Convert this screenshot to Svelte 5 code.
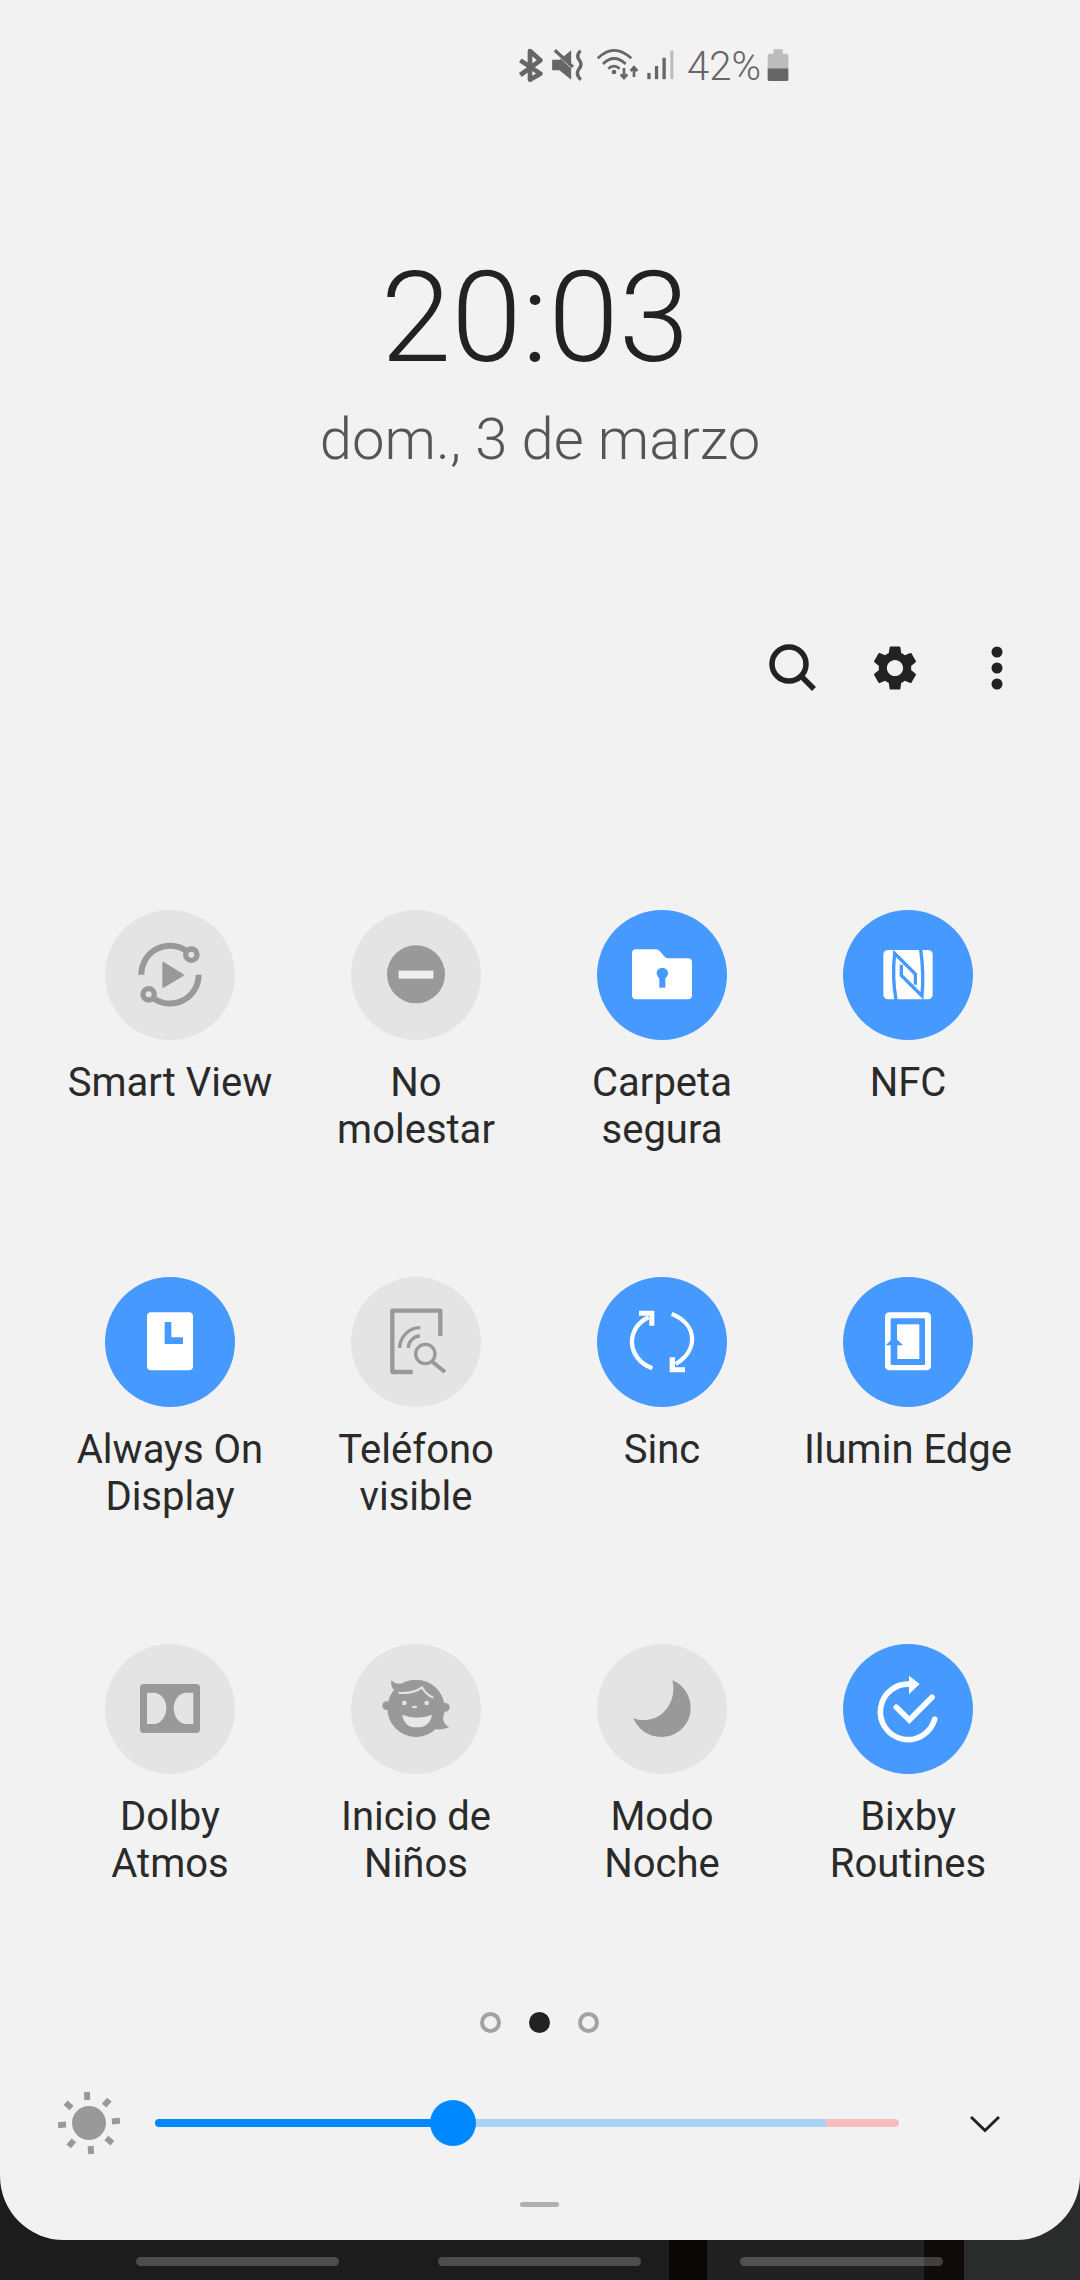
<script>
  const B = '#4599ff';
  const rows = [
    [
      { id: 'smart', label: ['Smart View'], on: false, vb: '135 60 390 390' },
      { id: 'dnd', label: ['No', 'molestar'], on: false, vb: '873 60 390 390' },
      { id: 'folder', label: ['Carpeta', 'segura'], on: true, vb: '111 60 390 390' },
      { id: 'nfc', label: ['NFC'], on: true, vb: '849 60 390 390' }
    ],
    [
      { id: 'aod', label: ['Always On', 'Display'], on: true, vb: '135 51 390 390' },
      { id: 'phone', label: ['Teléfono', 'visible'], on: false, vb: '873 51 390 390' },
      { id: 'sync', label: ['Sinc'], on: true, vb: '111 51 390 390' },
      { id: 'edge', label: ['Ilumin Edge'], on: true, vb: '849 51 390 390' }
    ],
    [
      { id: 'dolby', label: ['Dolby', 'Atmos'], on: false, vb: '135 42 390 390' },
      { id: 'kids', label: ['Inicio de', 'Niños'], on: false, vb: '873 42 390 390' },
      { id: 'moon', label: ['Modo', 'Noche'], on: false, vb: '111 42 390 390' },
      { id: 'bixby', label: ['Bixby', 'Routines'], on: true, vb: '849 42 390 390' }
    ]
  ];
  const tiles = rows.flat();
</script>

<div class="screen">
  <div class="panel">
    <div class="status">
      <svg class="s-bt" viewBox="115 85 75 105"><path d="M122 122 L182 162 L151 180 V94 L182 122 L122 166" fill="none" stroke="#666" stroke-width="14" stroke-linejoin="round"/></svg>
      <svg class="s-mute" viewBox="215 85 95 105">
        <path d="M218 120 H240 L275 92 V180 L240 152 H218Z" fill="#666"/>
        <path d="M218 88 L280 146" stroke="#f2f2f2" stroke-width="7"/>
        <path d="M226 92 L280 142" stroke="#666" stroke-width="10"/>
        <path d="M303 93 Q 288 108 300 122 Q 310 136 297 150 Q 288 165 304 180" fill="none" stroke="#666" stroke-width="10"/>
      </svg>
      <svg class="s-wifi" viewBox="345 85 135 105">
        <g fill="none" stroke="#666" stroke-width="8">
          <path d="M353 116 Q 402 68 454 116"/>
          <path d="M369 133 Q 402 100 437 133"/>
          <path d="M385 147 Q 402 132 419 147"/>
          <path d="M432 145 V174 M422 164 L432 175 L442 164"/>
          <path d="M462 172 V144 M452 154 L462 143 L472 154"/>
        </g>
        <circle cx="402" cy="157" r="7" fill="#666"/>
      </svg>
      <svg class="s-sig" viewBox="498 85 85 105">
        <rect x="502" y="160" width="10" height="19" fill="#666"/>
        <rect x="525" y="139" width="10" height="40" fill="#666"/>
        <rect x="548" y="114" width="10" height="65" fill="#666"/>
        <rect x="572" y="92" width="9" height="87" fill="#bbb"/>
      </svg>
      <span class="pct">42%</span>
      <svg class="s-bat" viewBox="862 85 73 105">
        <path d="M885 88 H913 V102 H924 Q930 102 930 108 V148 H867 V108 Q867 102 873 102 H885Z" fill="#bcbcbc"/>
        <path d="M867 147 H930 V179 Q930 185 924 185 H873 Q867 185 867 179Z" fill="#666"/>
      </svg>
    </div>

    <div class="time">20:03</div>
    <div class="date">dom., 3 de marzo</div>

    <div class="toolbar">
      <svg class="t-search" width="60" height="60" viewBox="0 0 60 60"><circle cx="25" cy="26" r="17" fill="none" stroke="#222" stroke-width="5.5"/><path d="M37 38 L50 51" stroke="#222" stroke-width="5.5"/></svg>
      <svg class="t-gear" width="54" height="54" viewBox="0 0 24 24"><path fill="#222" d="M19.14 12.94c.04-.3.06-.61.06-.94 0-.32-.02-.64-.07-.94l2.03-1.58c.18-.14.23-.41.12-.61l-1.92-3.32c-.12-.22-.37-.29-.59-.22l-2.39.96c-.5-.38-1.03-.7-1.62-.94l-.36-2.54c-.04-.24-.24-.41-.48-.41h-3.84c-.24 0-.43.17-.47.41l-.36 2.54c-.59.24-1.13.57-1.62.94l-2.39-.96c-.22-.08-.47 0-.59.22L2.74 8.87c-.12.21-.08.47.12.61l2.03 1.58c-.05.3-.09.63-.09.94s.02.64.07.94l-2.03 1.58c-.18.14-.23.41-.12.61l1.92 3.32c.12.22.37.29.59.22l2.39-.96c.5.38 1.03.7 1.62.94l.36 2.54c.05.24.24.41.48.41h3.84c.24 0 .44-.17.47-.41l.36-2.54c.59-.24 1.13-.56 1.62-.94l2.39.96c.22.08.47 0 .59-.22l1.92-3.32c.12-.22.07-.47-.12-.61l-2.01-1.58zM12 15.6c-1.98 0-3.6-1.62-3.6-3.6s1.62-3.6 3.6-3.6 3.6 1.62 3.6 3.6-1.62 3.6-3.6 3.6z"/></svg>
      <svg class="t-more" width="12" height="44" viewBox="0 0 12 44"><circle cx="6" cy="6" r="5.5" fill="#222"/><circle cx="6" cy="22" r="5.5" fill="#222"/><circle cx="6" cy="38" r="5.5" fill="#222"/></svg>
    </div>

    <div class="grid">
      {#each tiles as t}
        <div class="tile">
          <div class="disc" class:on={t.on}>
            <svg viewBox={t.vb} width="130" height="130">
              {#if t.id === 'smart'}
                <g fill="none" stroke="#999" stroke-width="18">
                  <path d="M244 254 A 86 86 0 0 1 378 182"/>
                  <path d="M416 254 A 86 86 0 0 1 282 326"/>
                  <circle cx="394" cy="194" r="17" stroke-width="16"/>
                  <circle cx="266" cy="313" r="17" stroke-width="16"/>
                </g>
                <path d="M307 218 Q307 214 311 216 L370 252 Q373 255 370 258 L311 293 Q307 295 307 291Z" fill="#999"/>
              {:else if t.id === 'dnd'}
                <circle cx="1068" cy="253" r="87" fill="#999"/>
                <rect x="1016" y="242" width="104" height="24" fill="#f0f0f0"/>
              {:else if t.id === 'folder'}
                <path d="M216 190 Q216 178 228 178 H288 Q295 178 299 183 L312 198 Q316 205 324 205 H384 Q396 205 396 217 V316 Q396 328 384 328 H228 Q216 328 216 316Z" fill="#fff"/>
                <circle cx="307" cy="250" r="17" fill={B}/>
                <rect x="298" y="252" width="18" height="41" fill={B}/>
              {:else if t.id === 'nfc'}
                <rect x="970" y="180" width="148" height="148" rx="14" fill="#fff"/>
                <g fill="none" stroke={B} stroke-width="10">
                  <path d="M1008 330 Q 996 260 1004 190 L1066 252 V284"/>
                  <path d="M1082 178 Q 1092 250 1086 318 L1024 256 V224"/>
                </g>
              {:else if t.id === 'aod'}
                <rect x="261" y="157" width="138" height="174" rx="12" fill="#fff"/>
                <path d="M314 186 H334 V232 H369 V252 H314Z" fill={B}/>
              {:else if t.id === 'phone'}
                <g fill="none" stroke="#999" stroke-linejoin="round">
                  <path d="M1058 336 H997 V152 H1141 V228" stroke-width="13"/>
                  <path d="M1019 264 A 62 62 0 0 1 1081 203" stroke-width="10"/>
                  <path d="M1045 264 A 36 36 0 0 1 1080 228" stroke-width="10"/>
                  <circle cx="1096" cy="282" r="29" stroke-width="10"/>
                  <path d="M1118 306 L1155 336" stroke-width="12"/>
                </g>
              {:else if t.id === 'sync'}
                <g fill="none" stroke="#fff" stroke-width="13">
                  <path d="M277 325 C 200 296 195 205 266 172"/>
                  <path d="M335 162 C 412 192 417 270 347 312"/>
                </g>
                <path d="M237 152 H283 V197 H268 V167 H237Z" fill="#fff"/>
                <path d="M329 292 H345 V322 H375 V337 H329Z" fill="#fff"/>
              {:else if t.id === 'edge'}
                <rect x="975" y="157" width="138" height="174" rx="13" fill="#fff"/>
                <rect x="992" y="175" width="103" height="140" rx="4" fill={B}/>
                <rect x="1011" y="193" width="67" height="104" fill="#fff"/>
                <path d="M977 256 L1003 231 L1029 256 H1012 V297 H996 V256Z" fill={B}/>
              {:else if t.id === 'dolby'}
                <rect x="240" y="162" width="180" height="147" rx="11" fill="#999"/>
                <path d="M261 188 H280 A 39 47 0 0 1 280 282 H261Z" fill="#e4e4e4"/>
                <path d="M400 188 H380 A 39 47 0 0 0 380 282 H400Z" fill="#e4e4e4"/>
              {:else if t.id === 'kids'}
                <circle cx="1068" cy="235" r="86" fill="#999"/>
                <circle cx="980" cy="227" r="13" fill="#999"/>
                <circle cx="1156" cy="232" r="13" fill="#999"/>
                <path d="M1002 180 Q 990 165 995 150 Q 1005 168 1040 158Z" fill="#999"/>
                <path d="M1148 258 Q1150 285 1168 292 Q1145 302 1120 296Z" fill="#999"/>
                <path d="M1015 188 Q1060 192 1086 172 Q1098 195 1120 203" fill="none" stroke="#e4e4e4" stroke-width="6"/>
                <circle cx="1033" cy="219" r="7" fill="#e4e4e4"/>
                <circle cx="1100" cy="219" r="7" fill="#e4e4e4"/>
                <ellipse cx="1064" cy="231" rx="8" ry="4" fill="#e4e4e4"/>
                <path d="M1027 254 Q1070 272 1116 254 Q1110 292 1070 292 Q1032 292 1027 254Z" fill="#e8e8e8"/>
              {:else if t.id === 'moon'}
                <path d="M337 151 C372 165 392 198 392 235 C392 283 353 321 305 321 C266 321 235 300 220 265 C232 270 245 271 258 270 C312 268 352 210 337 151Z" fill="#999"/>
              {:else if t.id === 'bixby'}
                <path d="M1124 268 A 83 83 0 1 1 1052 163" fill="none" stroke="#fff" stroke-width="17" stroke-linecap="round"/>
                <path d="M1047 137 L1079 162 L1047 193Z" fill="#fff"/>
                <path d="M1009 232 L1048 270 L1116 202" fill="none" stroke="#fff" stroke-width="17" stroke-linecap="round"/>
              {/if}
            </svg>
          </div>
          <div class="label">
            {#each t.label as l}<div>{l}</div>{/each}
          </div>
        </div>
      {/each}
    </div>

    <div class="pager">
      <span class="ring"></span><span class="dot"></span><span class="ring"></span>
    </div>

    <div class="bright">
      <svg class="sun" width="64" height="64" viewBox="-32 -32 64 64">
        <circle r="17" fill="#999"/>
        <g fill="#999" transform="rotate(-4)">
          {#each [0, 45, 90, 135, 180, 225, 270, 315] as a}
            <rect x="-3" y="-31" width="6" height="8" transform="rotate({a})"/>
          {/each}
        </g>
      </svg>
      <div class="track">
        <div class="seg fill"></div>
        <div class="seg rest"></div>
        <div class="seg hot"></div>
        <div class="thumb"></div>
      </div>
      <svg class="chev" width="30" height="18" viewBox="0 0 30 18"><path d="M1 2 L15 15.5 L29 2" fill="none" stroke="#222" stroke-width="3"/></svg>
    </div>

    <div class="handle"></div>
  </div>

  <div class="nav">
    <span class="bar"></span><span class="bar"></span><span class="bar"></span>
  </div>
</div>

<style>
  :global(body) { margin: 0; background: #1c1c1c; }
  .screen {
    width: 1080px; height: 2280px; overflow: hidden;
    font-family: Roboto, sans-serif;
    background: linear-gradient(90deg, #1c1c1c 0 669px, #0a0806 669px 707px, #212121 707px 924px, #0e0b09 924px 964px, #2a2c2b 964px);
  }
  .panel {
    height: 2240px; background: #f2f2f2; border-radius: 0 0 64px 64px;
    display: flex; flex-direction: column; box-sizing: border-box;
  }
  .status { height: 92px; padding: 48px 0 0 518px; box-sizing: border-box; display: flex; align-items: flex-start; }
  .status svg { height: 35px; flex: none; }
  .s-bt { width: 25px; }
  .s-mute { width: 32px; margin-left: 8px; }
  .s-wifi { width: 45px; margin-left: 12px; }
  .s-sig { width: 28px; margin-left: 6px; }
  .pct { font-size: 40px; font-weight: 300; color: #666; line-height: 37px; margin-left: 13px; width: 79px; white-space: nowrap; }
  .s-bat { width: 24px; }
  .time {
    margin-top: 156px; height: 140px; line-height: 140px; text-align: center;
    font-size: 127px; font-weight: 300; color: #222; padding-right: 10px;
  }
  .date {
    margin-top: 18px; height: 66px; line-height: 66px; text-align: center;
    font-size: 58px; font-weight: 300; color: #555;
  }
  .toolbar { margin-top: 166px; height: 60px; display: flex; align-items: center; position: relative; padding-left: 764px; }
  .t-gear { margin-left: 44px; }
  .t-more { margin-left: 69px; }
  .grid { margin-top: 212px; padding-left: 47px; display: grid; grid-template-columns: repeat(4, 246px); grid-auto-rows: 367px; }
  .tile { display: flex; flex-direction: column; align-items: center; }
  .disc { width: 130px; height: 130px; border-radius: 50%; background: #e4e4e4; flex: none; }
  .disc.on { background: #4599ff; }
  .disc svg { display: block; }
  .label { margin-top: 19px; text-align: center; font-size: 40px; line-height: 47px; color: #2a2a2a; white-space: nowrap; }
  .pager { height: 22px; display: flex; justify-content: center; align-items: center; gap: 28px; padding-right: 2px; }
  .ring { width: 21px; height: 21px; box-sizing: border-box; border: 4px solid #a2a2a2; border-radius: 50%; }
  .dot { width: 21px; height: 21px; background: #222; border-radius: 50%; }
  .bright { margin-top: 67px; height: 46px; display: flex; align-items: center; padding-left: 57px; }
  .track { position: relative; margin-left: 34px; width: 744px; height: 8px; display: flex; border-radius: 4px; overflow: visible; flex: none; }
  .seg { height: 8px; }
  .fill { width: 298px; background: #0088ff; border-radius: 4px 0 0 4px; }
  .rest { width: 373px; background: #aad2f5; }
  .hot { width: 73px; background: #f6bfbd; border-radius: 0 4px 4px 0; }
  .thumb { position: absolute; left: 275px; top: -19px; width: 46px; height: 46px; border-radius: 50%; background: #0088ff; }
  .chev { margin-left: 71px; margin-top: 2px; }
  .handle { margin: 56px auto 0; width: 39px; height: 5px; border-radius: 3px; background: #b0b0b0; transform: translateX(-1px); }
  .nav { height: 40px; position: relative; display: flex; align-items: center; padding: 2px 0 0 136px; box-sizing: border-box; gap: 99px; }
  .bar { width: 203px; height: 9px; border-radius: 5px; background: rgba(255,255,255,.22); }
</style>
